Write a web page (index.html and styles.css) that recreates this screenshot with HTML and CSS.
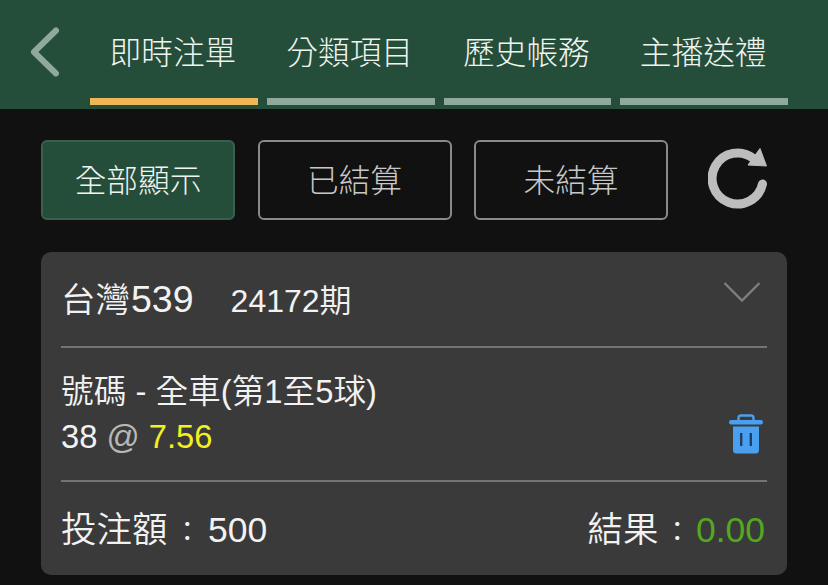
FILE: index.html
```html
<!DOCTYPE html>
<html lang="zh-Hant">
<head>
<meta charset="utf-8">
<title>即時注單</title>
<link rel="stylesheet" href="styles.css">
</head>
<body>
<header class="topbar">
  <button class="back" aria-label="返回">
    <svg width="30" height="52" viewBox="0 0 30 52"><path d="M27 4.500 L5 26 L27 47.500" fill="none" stroke="#8fa99c" stroke-width="6" stroke-linecap="round" stroke-linejoin="round"/></svg>
  </button>
  <nav class="tabs">
    <a class="tab tab-active">即時注單</a>
    <a class="tab">分類項目</a>
    <a class="tab">歷史帳務</a>
    <a class="tab">主播送禮</a>
  </nav>
</header>
<main class="content">
  <div class="filters">
    <button class="filter filter-active">全部顯示</button>
    <button class="filter">已結算</button>
    <button class="filter">未結算</button>
    <svg class="refresh" width="60" height="62" viewBox="0 0 60 62"><path d="M45.500 11.500 A25.500 25.500 0 1 0 54.500 37" fill="none" stroke="#bdbdbd" stroke-width="9" stroke-linecap="round"/><path d="M52 1.500 L58.500 19 L40 18 Z" fill="#bdbdbd" stroke="#bdbdbd" stroke-width="1" stroke-linejoin="round"/></svg>
  </div>
  <section class="card">
    <div class="card-head">
      <div class="title"><span class="game">台灣<span class="game-no">539</span></span><span class="period">24172期</span></div>
      <svg class="chevron" width="38" height="22" viewBox="0 0 38 22"><path d="M1.500 2 L19 19.500 L36.500 2" fill="none" stroke="#7e7e7e" stroke-width="2.400"/></svg>
    </div>
    <div class="card-body">
      <div class="bet">
        <div class="bet-line">號碼 - 全車(第1至5球)</div>
        <div class="bet-line">38 <span class="at">@</span> <span class="odds">7.56</span></div>
      </div>
      <svg class="trash" width="34" height="40" viewBox="0 0 34 40"><path d="M9.500 6 V4 Q9.500 1.500 12 1.500 H22 Q24.500 1.500 24.500 4 V6" fill="none" stroke="#4a9ff0" stroke-width="2.400"/><rect x="0" y="6" width="34" height="4.500" rx="2.200" fill="#4a9ff0"/><path d="M4 12.500 H30 V36 Q30 39.500 26.500 39.500 H7.500 Q4 39.500 4 36 Z" fill="#4a9ff0"/><rect x="11" y="19" width="2.400" height="13" fill="#1d3f63"/><rect x="20.600" y="19" width="2.400" height="13" fill="#1d3f63"/></svg>
    </div>
    <div class="card-foot">
      <div>投注額<span class="colon">：</span>500</div>
      <div>結果<span class="colon colon-tight">：</span><span class="result">0.00</span></div>
    </div>
  </section>
</main>
</body>
</html>
```
FILE: styles.css
```css
* { box-sizing: border-box; }
html, body { margin: 0; height: 100%; }
body {
  background: #111111;
  color: #f2f2f2;
  font-family: "Liberation Sans", "Noto Sans CJK TC", sans-serif;
  font-weight: 350;
  overflow: hidden;
}
.topbar {
  height: 109px;
  background: #244d3a;
  display: flex;
  padding-left: 29px;
}
.back {
  width: 61px;
  height: 56px;
  margin-top: 26px;
  padding: 0;
  background: none;
  border: 0;
  display: flex;
  align-items: flex-start;
}
.tabs {
  display: flex;
  gap: 9px;
  width: 698px;
}
.tab {
  flex: 1 1 0;
  height: 105px;
  border-bottom: 7px solid #8fa99c;
  color: #f0f4f1;
  font-size: 31.700px;
  font-weight: 300;
  line-height: 36px;
  padding: 35px 2px 0 0;
  text-align: center;
  white-space: nowrap;
}
.tab-active { border-bottom-color: #efb655; }
.content { padding: 31px 41px 0; }
.filters {
  display: flex;
  align-items: flex-start;
  gap: 22.500px;
  height: 80px;
}
.filter {
  width: 194px;
  height: 80px;
  background: transparent;
  border: 2px solid #8a8a8a;
  border-radius: 6px;
  color: #c8c8c8;
  font-family: inherit;
  font-size: 31.700px;
  font-weight: 300;
  padding: 0 0 4px;
}
.filter-active {
  background: #244d3a;
  border-color: #3a5f4e;
  color: #f0f4f1;
}
.refresh { margin-left: 17px; margin-top: 7px; }
.card {
  margin-top: 32px;
  width: 746px;
  height: 323px;
  background: #3a3a3a;
  border-radius: 10px;
  padding: 0 20px;
}
.card-head {
  height: 96px;
  border-bottom: 2px solid #747474;
  display: flex;
  justify-content: space-between;
}
.title {
  display: flex;
  align-items: baseline;
  gap: 37px;
  padding-top: 23px;
}
.game { font-size: 34.500px; line-height: 48px; }
.game-no { font-size: 37.500px; margin-left: 1px; }
.period { font-size: 32px; line-height: 48px; }
.chevron { margin-top: 29px; margin-right: 6px; }
.card-body {
  height: 134px;
  border-bottom: 2px solid #747474;
  display: flex;
  justify-content: space-between;
  align-items: flex-start;
}
.bet { padding-top: 21px; }
.bet-line { font-size: 32.700px; line-height: 45px; white-space: nowrap; }
.at { color: #b8b8b8; }
.odds { color: #f4f01f; }
.trash { margin-top: 66px; margin-right: 4px; }
.card-foot {
  display: flex;
  justify-content: space-between;
  font-size: 35.500px;
  line-height: 44px;
  padding: 26px 2px 0 0;
}
.colon { font-size: 28px; padding: 0 6.750px 0 5.750px; }
.colon-tight { padding: 0 4.750px; }
.result { color: #54a820; }
```
